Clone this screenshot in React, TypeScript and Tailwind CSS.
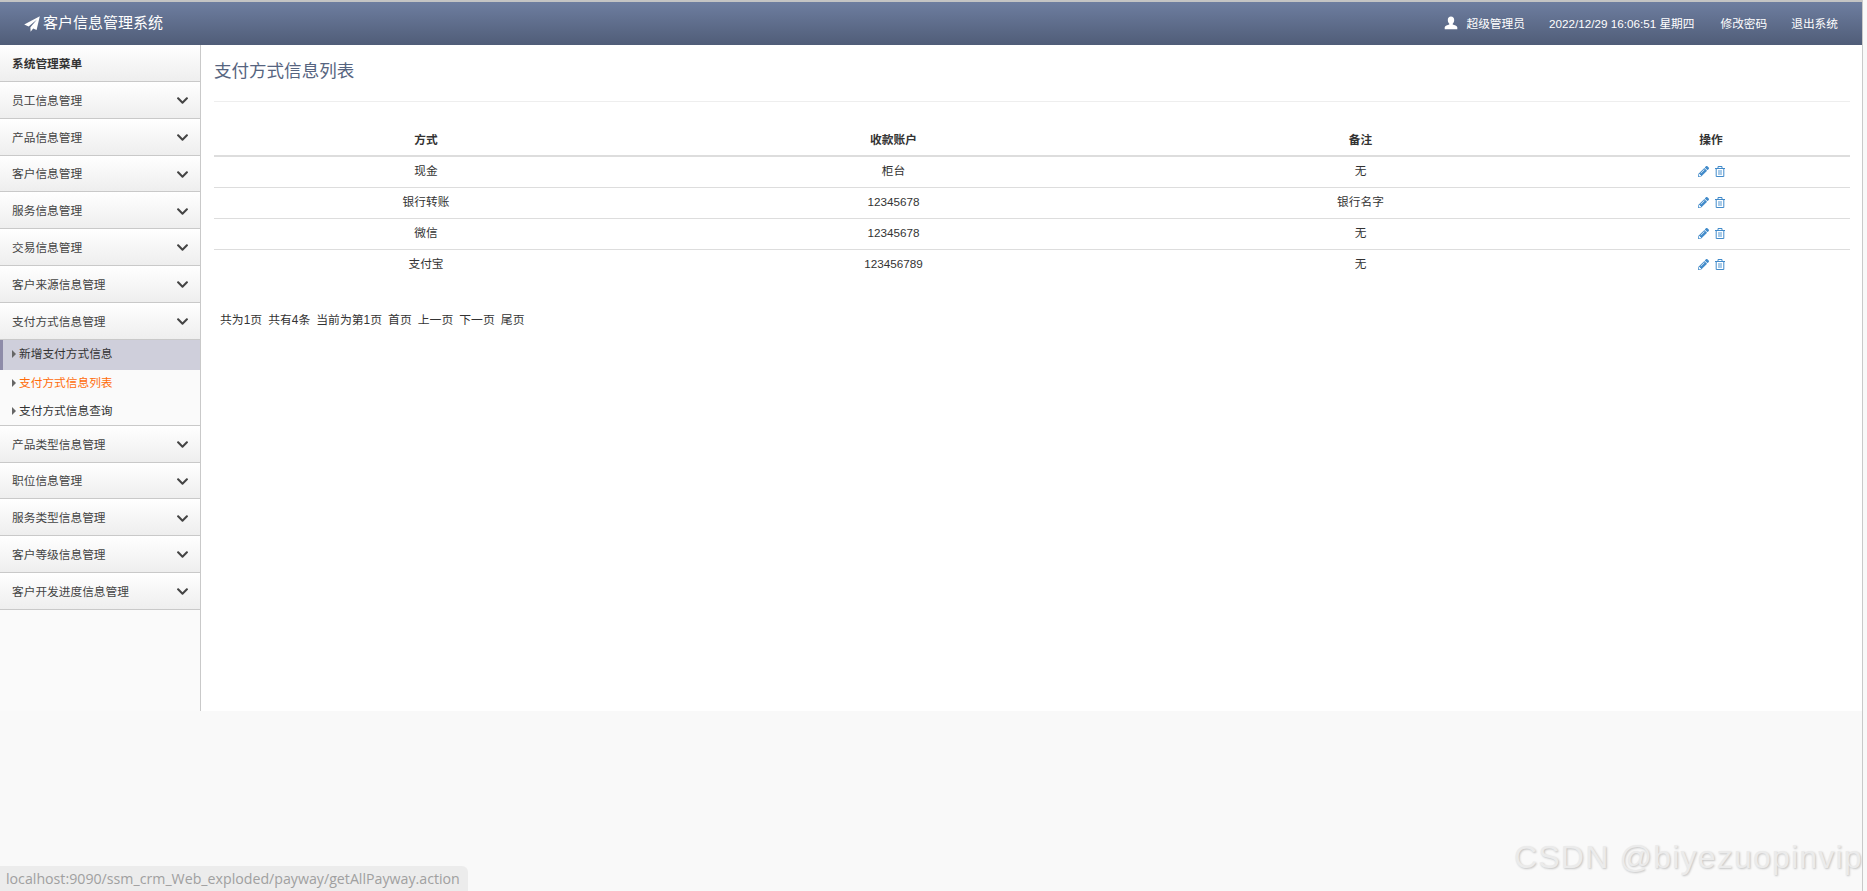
import React from 'react';
import { FaChevronDown, FaPencilAlt } from 'react-icons/fa';

const FONT = "font-['Liberation_Sans','Noto_Sans_CJK_SC',sans-serif]";

const MENU_TOP = ['员工信息管理', '产品信息管理', '客户信息管理', '服务信息管理', '交易信息管理', '客户来源信息管理'];
const MENU_BOTTOM = ['产品类型信息管理', '职位信息管理', '服务类型信息管理', '客户等级信息管理', '客户开发进度信息管理'];

const ROWS = [
  { way: '现金', account: '柜台', note: '无' },
  { way: '银行转账', account: '12345678', note: '银行名字' },
  { way: '微信', account: '12345678', note: '无' },
  { way: '支付宝', account: '123456789', note: '无' },
];

const PAGER = ['共为1页', '共有4条', '当前为第1页', '首页', '上一页', '下一页', '尾页'];

const PlaneIcon = () => (
  <svg viewBox="0 0 16 16" className="h-4 w-4 fill-white">
    <path d="M15.8 0.2 L0.2 8.6 L4.6 10.4 L13 3.4 L6.4 11.2 L6.6 15.8 L9.2 12.6 L12.6 14 Z" />
  </svg>
);

const UserIcon = () => (
  <svg viewBox="0 0 14 14" className="h-[14px] w-[14px] fill-white">
    <path d="M7 0.5 C9 0.5 10.2 2 10.2 4 C10.2 5.6 9.5 7 8.7 7.8 L8.7 8.6 C10.6 9.2 13 10 13.3 11.2 L13.3 13.2 L0.7 13.2 L0.7 11.2 C1 10 3.4 9.2 5.3 8.6 L5.3 7.8 C4.5 7 3.8 5.6 3.8 4 C3.8 2 5 0.5 7 0.5 Z" />
  </svg>
);

const TrashIcon = () => (
  <svg viewBox="0 0 10 11" className="h-[11px] w-[10px]">
    <path d="M0 2.5 H10 M3 2.5 V0.5 H7 V2.5" fill="none" stroke="#428bca" strokeWidth="1" />
    <path d="M1.2 2.5 V10.5 H8.8 V2.5" fill="none" stroke="#428bca" strokeWidth="1" />
    <path d="M3 4 H7 V9 H3 Z" fill="#a9cbe8" />
  </svg>
);

const MenuItem = ({ label }: { label: string }) => (
  <div className="flex h-[36.85px] items-center justify-between border-b border-[#c9c9c9] bg-gradient-to-b from-white to-[#eeeeee] pl-3 pr-[11px] pt-[1.5px] text-[#444]">
    <span>{label}</span>
    <FaChevronDown className="text-[13px] text-[#444]" />
  </div>
);

const SubItem = ({ label, active, current }: { label: string; active?: boolean; current?: boolean }) => (
  <div
    className={`flex items-center gap-[3px] ${active ? 'h-[30px] border-l-[3px] border-[#8e8ba8] bg-[#cfcfdb] pb-[2px] pl-[9px]' : 'h-[27.5px] pb-px pl-3'} ${current ? 'text-[#ff6c0a]' : 'text-[#333]'}`}
  >
    <span className="h-0 w-0 border-y-[4px] border-l-[4px] border-y-transparent border-l-[#666]" />
    <span>{label}</span>
  </div>
);

const Sidebar = () => (
  <aside className="w-[201px] shrink-0 border-r border-[#c9c9c9] bg-[#fafafa]">
    <div className="flex h-[36.85px] items-center border-b border-[#c9c9c9] bg-gradient-to-b from-white to-[#eeeeee] pl-3 pt-[1.5px] font-bold text-[#333]">
      系统管理菜单
    </div>
    {MENU_TOP.map((label) => (
      <MenuItem key={label} label={label} />
    ))}
    <MenuItem label="支付方式信息管理" />
    <div className="border-b border-[#c9c9c9] bg-[#fafafa]">
      <SubItem label="新增支付方式信息" active />
      <SubItem label="支付方式信息列表" current />
      <SubItem label="支付方式信息查询" />
    </div>
    {MENU_BOTTOM.map((label) => (
      <MenuItem key={label} label={label} />
    ))}
  </aside>
);

const PaymentTable = () => (
  <table className="mt-[22px] w-full table-fixed border-collapse text-center text-[#333]">
    <colgroup>
      <col className="w-[424px]" />
      <col className="w-[511px]" />
      <col className="w-[423px]" />
      <col />
    </colgroup>
    <thead>
      <tr className="h-[32px] border-b-2 border-[#ddd] font-bold">
        <th>方式</th>
        <th>收款账户</th>
        <th>备注</th>
        <th>操作</th>
      </tr>
    </thead>
    <tbody>
      {ROWS.map((row) => (
        <tr key={row.way} className="h-[31px] border-b border-[#ddd] last:border-b-0 [&>td]:pb-px">
          <td>{row.way}</td>
          <td>{row.account}</td>
          <td>{row.note}</td>
          <td>
            <span className="mb-[2px] inline-flex items-center gap-[6px] align-middle">
              <FaPencilAlt className="text-[11px] text-[#428bca]" />
              <TrashIcon />
            </span>
          </td>
        </tr>
      ))}
    </tbody>
  </table>
);

export default function App() {
  return (
    <div className={`${FONT} relative h-[891px] w-full overflow-hidden bg-[#f9f9f9] text-[11.7px]`}>
      <div className="flex h-full w-[1863px] flex-col border-r border-[#c9c9c9]">
        <header className="flex h-[45px] shrink-0 items-center justify-between border-t-2 border-[#c4c4c4] bg-gradient-to-b from-[#6e7ea0] to-[#505d78] pl-6 pr-6 text-white">
          <div className="flex items-center gap-[3px] text-[15px]">
            <PlaneIcon />
            <span>客户信息管理系统</span>
          </div>
          <div className="flex items-center gap-6">
            <div className="flex items-center gap-2">
              <UserIcon />
              <span>超级管理员</span>
            </div>
            <span className="mr-[2px]">2022/12/29 16:06:51 星期四</span>
            <span>修改密码</span>
            <span>退出系统</span>
          </div>
        </header>
        <div className="flex h-[666px] shrink-0">
          <Sidebar />
          <main className="flex-1 bg-white pl-[13px] pr-[12px]">
            <h1 className="flex h-[57px] items-center border-b border-[#eee] pb-[4px] text-[17.55px] font-normal text-[#566480]">
              支付方式信息列表
            </h1>
            <PaymentTable />
            <div className="mt-[32px] flex gap-[6px] pl-[6px] text-[11.85px] text-[#333]">
              {PAGER.map((item) => (
                <span key={item}>{item}</span>
              ))}
            </div>
          </main>
        </div>
      </div>
      <div className="absolute bottom-0 left-0 flex h-[25px] w-[468px] items-center rounded-tr-md bg-[#ececec] pl-[6px] font-['Open_Sans',sans-serif] text-[14.2px] text-[#a0a0a0]">
        localhost:9090/ssm_crm_Web_exploded/payway/getAllPayway.action
      </div>
      <div className="absolute bottom-[10px] left-[1514px] w-[348px] overflow-hidden whitespace-nowrap text-[32px] tracking-[1.2px] text-[#ebebeb] [text-shadow:1px_1px_2px_#c4c4c4]">
        CSDN @biyezuopinvip
      </div>
    </div>
  );
}
